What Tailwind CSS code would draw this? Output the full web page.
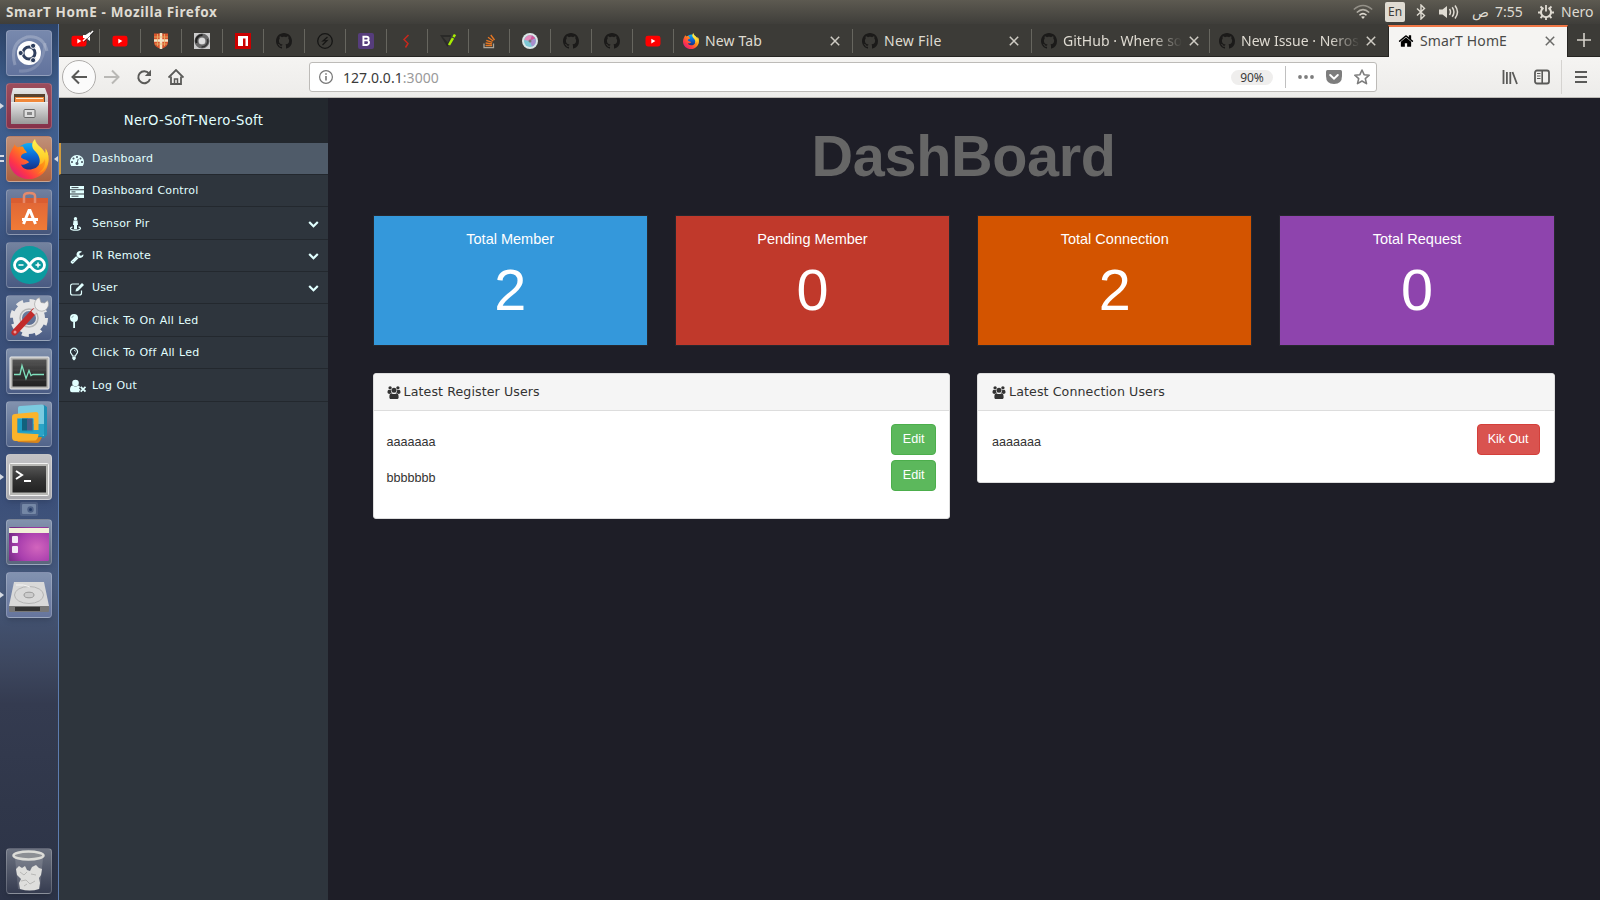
<!DOCTYPE html>
<html lang="en">
<head>
<meta charset="utf-8">
<title>SmarT HomE</title>
<script src="https://cdn.jsdelivr.net/npm/@tailwindcss/browser@4"></script>
</head>
<body class="w-[1600px] h-[900px] overflow-hidden bg-[#1e1e27] flex flex-col font-['Noto_Sans',sans-serif]">

<svg class="absolute w-0 h-0">
  <defs>
    <symbol id="gh" viewBox="0 0 16 16"><path fill="#1b1a19" d="M8 0C3.58 0 0 3.58 0 8c0 3.54 2.29 6.53 5.47 7.59.4.07.55-.17.55-.38 0-.19-.01-.82-.01-1.49-2.01.37-2.53-.49-2.69-.94-.09-.23-.48-.94-.82-1.13-.28-.15-.68-.52-.01-.53.63-.01 1.08.58 1.23.82.72 1.21 1.87.87 2.33.66.07-.52.28-.87.51-1.07-1.78-.2-3.64-.89-3.64-3.95 0-.87.31-1.59.82-2.15-.08-.2-.36-1.02.08-2.12 0 0 .67-.21 2.2.82.64-.18 1.32-.27 2-.27s1.36.09 2 .27c1.53-1.04 2.2-.82 2.2-.82.44 1.1.16 1.92.08 2.12.51.56.82 1.27.82 2.15 0 3.07-1.87 3.75-3.65 3.95.29.25.54.73.54 1.48 0 1.07-.01 1.93-.01 2.2 0 .21.15.46.55.38A8.01 8.01 0 0 0 16 8c0-4.42-3.58-8-8-8z"/></symbol>
    <symbol id="yt" viewBox="0 0 16 16"><rect x=".5" y="2.7" width="15" height="10.8" rx="2.4" fill="#f00"/><path d="M6.3 5.8v4.6l4.1-2.3z" fill="#fff"/></symbol>
    <symbol id="x" viewBox="0 0 10 10"><path d="M.8.8l8.4 8.4M9.2.8L.8 9.2" fill="none" stroke="currentColor" stroke-width="1.5"/></symbol>
    <symbol id="chev" viewBox="0 0 1792 1792"><path fill="currentColor" d="M1683 808l-742 741q-19 19-45 19t-45-19l-742-741q-19-19-19-45.5t19-45.5l166-165q19-19 45-19t45 19l531 531 531-531q19-19 45-19t45 19l166 165q19 19 19 45.5t-19 45.5z"/></symbol>
    <symbol id="users" viewBox="0 0 14 14"><g fill="#333"><circle cx="2.8" cy="2" r="1.8"/><circle cx="11.2" cy="2" r="1.8"/><circle cx="7" cy="4.6" r="2.7"/><path d="M0 6.8C0 5 .6 4 1.4 4c.5.4 1.6.5 2.3.3-.2 1.200.2 2.400.9 3.200-1 0-1.700.300-2.300 1C1 8.500 0 8 0 6.800zM14 6.800C14 5 13.400 4 12.600 4c-.5.4-1.600.5-2.300.3.2 1.200-.2 2.400-.9 3.200 1 0 1.700.300 2.300 1C13 8.500 14 8 14 6.800z"/><path d="M2 12c0-2.800.7-4.200 2.300-4.200C5.800 9 8.200 9 9.700 7.800c1.600 0 2.300 1.400 2.300 4.200 0 1.300-.8 2-2 2H4c-1.200 0-2-.7-2-2z"/></g></symbol>
    <symbol id="ff" viewBox="0 0 40 40">
      <circle cx="20.500" cy="18" r="14" fill="url(#ffb)"/>
      <path fill="url(#ffo)" d="M6 5c-2 4-6 9-6 16 0 11 9 19 20 19s19.500-8 19.500-19.500c0-5-1-8-3-11 .5 3 0 4-.5 5-1-2-3-4-5-6 1 6 2 11 0 15-2 5-6 7-11 7-4 0-7-2-8-5 3 1 5-.5 8-2-1-3-4-2-8-5 0-3 2-4 6-5-1-2-3-3-4-6-3 0-4 0-5 1-2-1-3-2-3.500-4z"/>
      <path fill="url(#ffy)" d="M26 0c-3 3-4 7-1 11 5 5 7 9 5 15 3-1 5-3 6-6 1 6-2 12-8 15 7-2 11.500-8 11.500-14.500 0-5-1-8-3-11 .5 3 0 4-.5 5C35 9 27 7 26 0z"/>
    </symbol>
    <linearGradient id="ffb" x1="0" y1="0" x2="0" y2="1"><stop offset="0" stop-color="#10aef5"/><stop offset=".5" stop-color="#0c62d0"/><stop offset="1" stop-color="#1a2a7a"/></linearGradient>
    <linearGradient id="ffo" x1="1" y1="0" x2="0" y2="1"><stop offset="0" stop-color="#ffd52e"/><stop offset=".4" stop-color="#ff8a16"/><stop offset=".7" stop-color="#ff3647"/><stop offset="1" stop-color="#c8109a"/></linearGradient>
    <linearGradient id="ffy" x1="0" y1="0" x2="0" y2="1"><stop offset="0" stop-color="#fff44f"/><stop offset=".5" stop-color="#ffd22e"/><stop offset="1" stop-color="#ff8a16"/></linearGradient>
    <linearGradient id="gray" x1="0" y1="0" x2="0" y2="1"><stop offset="0" stop-color="#e8e8e8"/><stop offset="1" stop-color="#999"/></linearGradient>
    <linearGradient id="dark" x1="0" y1="0" x2="0" y2="1"><stop offset="0" stop-color="#555"/><stop offset=".5" stop-color="#333"/><stop offset="1" stop-color="#222"/></linearGradient>
    <linearGradient id="bag" x1="0" y1="0" x2="0" y2="1"><stop offset="0" stop-color="#df6436"/><stop offset="1" stop-color="#f07b36"/></linearGradient>
    <radialGradient id="purp" cx=".7" cy=".6" r=".8"><stop offset="0" stop-color="#d265bd"/><stop offset=".6" stop-color="#a93fae"/><stop offset="1" stop-color="#752a85"/></radialGradient>
  </defs>
</svg>

<!-- Desktop panel -->
<header class="h-6 shrink-0 flex items-center justify-between bg-linear-to-b from-[#5d5a51] to-[#3f3e3a] text-[#dfdbd2] text-[14px] leading-6 whitespace-nowrap">
  <span class="pl-1.5 font-bold text-[13.5px] tracking-[.6px]">SmarT HomE - Mozilla Firefox</span>
  <div class="flex items-center h-full pr-1.5">
    <svg class="w-5 h-4 mr-3" viewBox="0 0 20 16" fill="none" stroke="#dfdbd2" stroke-width="1.500"><path d="M.8 5.500Q10-2.500 19.200 5.500" opacity=".45"/><path d="M3.800 8.500Q10 2.800 16.200 8.500" opacity=".7"/><path d="M6.500 11.300Q10 8 13.500 11.300"/><path d="M8 12.800Q10 11.500 12 12.800L10 15z" fill="#dfdbd2" stroke="none"/></svg>
    <span class="w-5 h-5 rounded-[2px] bg-[#dfdbd2] text-[#3c3b37] text-[12px] leading-5 text-center mr-[11px]">En</span>
    <svg class="w-[10px] h-4 mr-[13px]" viewBox="0 0 10 16" fill="none" stroke="#dfdbd2" stroke-width="1.400"><path d="M1 4.500l7.500 7L5 15V1l3.500 3.500-7.500 7"/></svg>
    <svg class="w-5 h-4 mr-[13px]" viewBox="0 0 20 16"><path d="M0 5.500h3.500L8 2v12l-4.500-3.500H0z" fill="#dfdbd2"/><path d="M10.500 5q2 3 0 6M13.200 3.200q3.500 4.800 0 9.600M16 1.500q5 6.500 0 13" fill="none" stroke="#dfdbd2" stroke-width="1.500"/></svg>
    <span class="font-['DejaVu_Sans',sans-serif] text-[14px] w-[17px] mr-[6px]">ص</span>
    <span class="w-[28px] mr-[15px]">7:55</span>
    <svg class="w-4 h-4 mr-[7px]" viewBox="0 0 16 16" fill="none" stroke="#dfdbd2"><path d="M5.500 3.800a5 5 0 1 0 5 0" stroke-width="2"/><path d="M8 1v6.500" stroke-width="1.800"/><path d="M2.500 2.500l2 2M13.500 2.500l-2 2M0 8.500h3M16 8.500h-3M2.500 14l2-2M13.500 14l-2-2M8 16v-3" stroke-width="1.800"/></svg>
    <span class="w-[33px]">Nero</span>
  </div>
</header>

<div class="flex flex-1 min-h-0">

  <!-- Launcher -->
  <nav class="w-[59px] shrink-0 border-r border-[#5d7db0] bg-[linear-gradient(180deg,#2c4266_0px,#40608f_70px,#3f5b8c_180px,#3a5079_230px,#3b4f79_470px,#46597c_560px,#3d475f_640px,#343b50_680px,#30374a_780px,#2c3347_876px)] flex flex-col items-center pt-1.5 pb-1.5 pr-px gap-[7px] relative">
    <div class="w-[46px] h-[46px] shrink-0 rounded-[4px] border border-white/20 bg-linear-to-b from-[#7889ad] to-[#62739d] grid place-items-center shadow-md">
      <svg class="w-[44px] h-[44px]" viewBox="0 0 44 44"><path d="M8 34Q2 12 20 6Q36 4 40 20" fill="none" stroke="#fff" stroke-opacity=".22" stroke-width="3"/><path d="M12 40Q36 42 38 12" fill="none" stroke="#fff" stroke-opacity=".15" stroke-width="3"/><circle cx="22" cy="22" r="12" fill="#fff"/><circle cx="22" cy="22" r="6" fill="none" stroke="#2f3f5e" stroke-width="3"/><g fill="#2f3f5e" stroke="#fff"><circle cx="13.700" cy="22" r="2.600"/><circle cx="26.100" cy="14.800" r="2.600"/><circle cx="26.100" cy="29.200" r="2.600"/></g></svg>
    </div>
    <div class="w-[46px] h-[46px] shrink-0 rounded-[4px] border border-white/20 bg-linear-to-b from-[#9c4d5c] to-[#86314a] grid place-items-center shadow-md">
      <svg class="w-[44px] h-[44px]" viewBox="0 0 44 44"><path d="M6 4h32l3 8v28H4V12z" fill="url(#gray)"/><path d="M7 10h31v12H7z" fill="#59432f"/><path d="M8 13h29v8H8z" fill="#f0883a"/><path d="M9 14.500h27" stroke="#fff0d0"/><path d="M4 18h37v22H4z" fill="url(#gray)"/><path d="M4 18.500h37" stroke="#eee"/><rect x="17" y="25.500" width="11" height="8" rx="1" fill="#ddd" stroke="#666"/><rect x="20" y="28" width="5" height="3" fill="#888"/></svg>
    </div>
    <div class="w-[46px] h-[46px] shrink-0 rounded-[4px] border border-white/20 bg-linear-to-b from-[#c09078] to-[#aa613f] grid place-items-center shadow-md">
      <svg class="w-10 h-10"><use href="#ff"/></svg>
    </div>
    <div class="w-[46px] h-[46px] shrink-0 rounded-[4px] border border-white/20 bg-linear-to-b from-[#71809f] to-[#45557a] grid place-items-center shadow-md">
      <svg class="w-[44px] h-[44px]" viewBox="0 0 44 44"><path d="M4 8h37l-1 32H4z" fill="url(#bag)"/><path d="M4 8h37l-.5 5H4z" fill="#d95d31"/><path d="M17 13V6q0-3 5.500-3T28 6v7" fill="none" stroke="#e58a6c" stroke-width="2.500"/><path d="M16.500 34L22 20.500h1L28.500 34M15 29.500h16" fill="none" stroke="#fff" stroke-width="3"/></svg>
    </div>
    <div class="w-[46px] h-[46px] shrink-0 rounded-[4px] border border-white/20 bg-linear-to-b from-[#74839f] to-[#495a82] grid place-items-center shadow-md">
      <svg class="w-[44px] h-[44px]" viewBox="0 0 44 44"><circle cx="22.500" cy="22" r="19" fill="#0c9a9f"/><path d="M22.500 22c-4-6-6.500-6.500-8.500-6.500a6.500 6.500 0 0 0 0 13c2 0 4.500-.5 8.500-6.500s6.500-6.500 8.500-6.500a6.500 6.500 0 0 1 0 13c-2 0-4.500-.5-8.500-6.500z" fill="none" stroke="#fff" stroke-width="2.800"/><path d="M11.500 22h5M28.500 22h5M31 19.500v5" stroke="#fff" stroke-width="1.500"/></svg>
    </div>
    <div class="w-[46px] h-[46px] shrink-0 rounded-[4px] border border-white/20 bg-linear-to-b from-[#8090ab] to-[#4b5c84] grid place-items-center shadow-md">
      <svg class="w-[44px] h-[44px]" viewBox="0 0 44 44"><circle cx="22" cy="22" r="11.500" fill="none" stroke="#e6e6e6" stroke-width="9"/><circle cx="22" cy="22" r="17" fill="none" stroke="#e6e6e6" stroke-width="4" stroke-dasharray="7 6.350"/><circle cx="22" cy="22" r="9" fill="none" stroke="#b5b5b5" stroke-width="1.500"/><path d="M7.500 36.500L27 15.500" stroke="#c22b2b" stroke-width="6" stroke-linecap="round"/><path d="M26 17l7-7" stroke="#ddd" stroke-width="5"/><path d="M40.500 4.500a7 7 0 1 1-8-3l1.500 5 3.500.5z" fill="#eee" stroke="#999" stroke-width=".6"/><circle cx="8" cy="36" r="1.500" fill="#e99"/></svg>
    </div>
    <div class="w-[46px] h-[46px] shrink-0 rounded-[4px] border border-white/20 bg-linear-to-b from-[#8090ab] to-[#4b5c84] grid place-items-center shadow-md">
      <svg class="w-[44px] h-[44px]" viewBox="0 0 44 44"><rect x="3" y="8" width="39" height="32" rx="1" fill="#b5b5b2" stroke="#eee"/><rect x="5.500" y="10.500" width="34" height="27" fill="url(#dark)"/><path d="M6 16h33M6 21h33M6 31h33" stroke="#555" stroke-width=".5"/><path d="M7 25.500h6l2-9 4 13 3-8 2 5 2-1h11" fill="none" stroke="#7fe0bd" stroke-width="1.300"/></svg>
    </div>
    <div class="w-[46px] h-[46px] shrink-0 rounded-[4px] border border-white/20 bg-linear-to-b from-[#8292ae] to-[#52648a] grid place-items-center shadow-md">
      <svg class="w-[44px] h-[44px]" viewBox="0 0 44 44"><path d="M13 5l24-2 3 2v28l-3 3-24-1z" fill="#1d8fb4"/><path d="M11 6q0-2 2-2l22-1.500q2 0 2 2V34H11z" fill="#7bcbe0"/><path d="M11 22h26v10q0 2-2 2H11z" fill="#2aa3c6"/><path d="M8 36l3 4 19 1q2 0 3-2l2-4z" fill="#d9851b"/><path fill-rule="evenodd" d="M5 15q0-3 3-3l21-2q2.500 0 2.500 2.500V28h-5V16l-16 .500V31l17 1h4q0 4-3 6.500l-20 .5q-3.500 0-3.500-4z" fill="#fbb42b"/><path d="M10.500 16.500h16V30h-16z" fill="#1d9cc2"/><path d="M15 16.500h5.500l-.5 12h-5z" fill="#12617d"/><path d="M20 16.500h5.500v12H20z" fill="#4a5c88"/></svg>
    </div>
    <div class="w-[46px] h-[46px] shrink-0 rounded-[4px] border border-white/30 bg-linear-to-b from-[#c2c2c5] to-[#a9a9ad] grid place-items-center shadow-md">
      <svg class="w-[44px] h-[44px]" viewBox="0 0 44 44"><rect x="2.500" y="8.500" width="39" height="32" rx="1" fill="#b8b8b5" stroke="#f2f2f2"/><rect x="5.500" y="11" width="33.500" height="26.500" fill="url(#dark)"/><path d="M9 16l6 4-6 4M17 26h7" fill="none" stroke="#fff" stroke-width="2"/></svg>
    </div>
    <div class="w-[18px] h-[14px] -mt-[5px] shrink-0 rounded-[2px] bg-white/10 grid place-items-center overflow-hidden">
      <svg class="w-[14px] h-[10px]" viewBox="0 0 14 10"><rect width="14" height="10" y="0" rx="1" fill="#7487a5"/><circle cx="8.500" cy="5.500" r="3.200" fill="#4c5f84"/><circle cx="8.500" cy="5.500" r="1.500" fill="#243c66"/></svg>
    </div>
    <div class="w-[46px] h-[46px] -mt-[4px] shrink-0 rounded-[4px] border border-white/20 bg-linear-to-b from-[#8292ae] to-[#5a667c] grid place-items-center shadow-md">
      <svg class="w-[44px] h-[44px]" viewBox="0 0 44 44"><rect x="2" y="7" width="40" height="34" rx="1.500" fill="url(#purp)"/><path d="M2 8h40v5H2z" fill="#f1f0d8"/><rect x="5" y="16" width="6" height="7" rx="1" fill="#f3eaf5"/><rect x="5" y="26" width="6" height="7" rx="1" fill="#f3eaf5"/></svg>
    </div>
    <div class="w-[46px] h-[46px] shrink-0 rounded-[4px] border border-white/20 bg-linear-to-b from-[#8292b0] to-[#66759d] grid place-items-center shadow-md">
      <svg class="w-[44px] h-[44px]" viewBox="0 0 44 44"><path d="M7 9h30l5 24H2z" fill="#d9d9d9"/><path d="M2 33h40v5q0 1-1 1H3q-1 0-1-1z" fill="#777"/><path d="M8 34h25v4H8z" fill="#333"/><ellipse cx="22" cy="22" rx="14.500" ry="8.500" fill="none" stroke="#b5b5b5"/><ellipse cx="22" cy="22" rx="5" ry="2.800" fill="#ccc" stroke="#999"/><path d="M9 12q8-1 14 2" stroke="#f3f3f3" fill="none"/></svg>
    </div>
    <div class="w-[46px] h-[46px] shrink-0 mt-auto rounded-[4px] border border-white/20 bg-linear-to-b from-[#6d7381] to-[#363c50] grid place-items-center shadow-md">
      <svg class="w-[44px] h-[44px]" viewBox="0 0 44 44"><path d="M8 9h28l-3 31q-11 2-22 0z" fill="#fff" fill-opacity=".14"/><ellipse cx="21.500" cy="6.500" rx="15" ry="4" fill="#8c8f94" stroke="#dcdcd8" stroke-width="2.500"/><path d="M9 20l3-3 3 2 3-2 2 4 3 1 2-4 4-2 3 3 3 1-1 6-2 3 1 5-1 6q-9 3-19 0l-1-6 2-4-4-4z" fill="#dededc"/><path d="M13 23l4 3 3-3M24 25l5 1M14 32l5-1 4 4 5-3M17 37l3-2" stroke="#b8b8b6" fill="none"/></svg>
    </div>
    <!-- running-app markers -->
    <i class="absolute left-0 top-[79px] border-y-[3px] border-l-4 border-y-transparent border-l-[#d5dae3]"></i>
    <i class="absolute left-0 top-[131px] w-1 h-[7px] border-y-2 border-[#d5dae3]"></i>
    <i class="absolute right-0 top-[132px] border-y-[3px] border-r-4 border-y-transparent border-r-[#d5dae3]"></i>
    <i class="absolute left-0 top-[450px] border-y-[3px] border-l-4 border-y-transparent border-l-[#d5dae3]"></i>
    <i class="absolute left-0 top-[568px] border-y-[3px] border-l-4 border-y-transparent border-l-[#d5dae3]"></i>
  </nav>

  <div class="flex-1 min-w-0 flex flex-col">

    <!-- Tabs -->
    <div class="h-[33px] shrink-0 flex items-stretch bg-[#3c3b37] border-b border-[#262522] text-[14px] text-[#dfdbd2] whitespace-nowrap [&_span]:-mt-[2px] [&_u]:w-[41px] [&_u]:h-6 [&_u]:mt-[5px] [&_u]:border-r [&_u]:border-[#67665f] [&_u]:grid [&_u]:place-items-center [&_u]:shrink-0 [&_u>svg]:w-4 [&_u>svg]:h-4">
      <u class="relative"><svg><use href="#yt"/></svg><svg class="absolute left-[23px] top-[1px] !w-3 !h-3" viewBox="0 0 12 12"><path d="M1 5h2.500L8 2v9L4 8H1z" fill="#fff"/><path d="M1 11L11 1" stroke="#fff" stroke-width="1.500"/><path d="M2 12L12 2" stroke="#222" stroke-width=".6"/></svg></u>
      <u><svg><use href="#yt"/></svg></u>
      <u><svg viewBox="0 0 16 16"><path d="M1 .5h14v9q0 4-7 6.500-7-2.500-7-6.500z" fill="#d8542c"/><path d="M8 0v16M1 7.500h14" stroke="#f3e3c5" stroke-width="2.500"/><path d="M4.500 1v12M11.500 1v12M1 4h14M2 11h12" stroke="#e8b36a" stroke-width=".8"/></svg></u>
      <u><svg viewBox="0 0 16 16"><rect width="16" height="16" fill="#ccc"/><circle cx="8" cy="8" r="5.500" fill="none" stroke="#666" stroke-width="4"/><path d="M2.500 10a6 6 0 0 1 6-8" fill="none" stroke="#222" stroke-width="2"/><path d="M13.500 6a6 6 0 0 1-6 8" fill="none" stroke="#333" stroke-width="1.500"/><circle cx="8" cy="8" r="3" fill="#ddd"/></svg></u>
      <u><svg viewBox="0 0 16 16"><rect width="16" height="16" fill="#cb0000"/><path d="M3 3h10v10h-2.500V5.500H8V13H3z" fill="#fff"/></svg></u>
      <u><svg><use href="#gh"/></svg></u>
      <u><svg viewBox="0 0 16 16" fill="none" stroke="#161615"><circle cx="8" cy="8" r="7.300" stroke-width="1.300"/><path d="M10.500 4L6 8l4-.500L5.500 12" stroke-width="1.200"/></svg></u>
      <u><svg viewBox="0 0 16 16"><rect width="16" height="16" rx="2" fill="#563d7c"/><path d="M5.400 3.800h3.200q2 0 2 1.900 0 1.700-2 1.700H5.400h3.400q2.200 0 2.200 2.200T8.800 12H5.400z" fill="none" stroke="#fff" stroke-width="1.900"/></svg></u>
      <u><svg viewBox="0 0 16 16"><path d="M9.500 2L5 6.500l4 4-2.500 4" fill="none" stroke="#c9281c" stroke-width="1.500"/></svg></u>
      <u><svg viewBox="0 0 16 16"><path d="M0 2h11L7.500 14z" fill="#2a2a28"/><path d="M3 4h7l-2 6z" fill="#3c3b37"/><path d="M9 12l6-10.500" stroke="#a8ef00" stroke-width="2.500" stroke-dasharray="8 1 4"/></svg></u>
      <u><svg viewBox="0 0 16 16" fill="none"><path d="M3 10.500v4.200h9.500v-4.200" stroke="#aaa59a" stroke-width="1.300"/><path d="M4.500 12.500H11M4.600 10l6.400.8M5.300 7.300l6 2M7 4.300l5.200 3.800M9.800 2l3.700 5" stroke="#e87722" stroke-width="1.300"/></svg></u>
      <u><svg viewBox="0 0 16 16"><circle cx="8" cy="8" r="8" fill="#dbe7e7"/><circle cx="8" cy="8" r="6" fill="#7cc8d5"/><path d="M8 8L2.300 7A6 6 0 0 1 10 2.300z" fill="#e58abb"/><path d="M8 8l5.500-2A6 6 0 0 1 10 13.500z" fill="#a98fce"/><path d="M8 8l2-5.700 3.500 3z" fill="#d3569c"/><circle cx="8" cy="8" r="1.500" fill="#777"/></svg></u>
      <u><svg><use href="#gh"/></svg></u>
      <u><svg><use href="#gh"/></svg></u>
      <u><svg><use href="#yt"/></svg></u>
      <div class="w-[179px] h-6 mt-[5px] pl-[9px] pr-[12px] border-r border-[#67665f] flex items-center"><svg class="w-4 h-4 mr-[6px]"><use href="#ff"/></svg><span class="flex-1 tracking-[.15px]">New Tab</span><svg class="w-[10px] h-[10px] text-[#cfccc4]"><use href="#x"/></svg></div>
      <div class="w-[179px] h-6 mt-[5px] pl-[9px] pr-[12px] border-r border-[#67665f] flex items-center"><svg class="w-4 h-4 mr-[6px]"><use href="#gh"/></svg><span class="flex-1 tracking-[.3px]">New File</span><svg class="w-[10px] h-[10px] text-[#cfccc4]"><use href="#x"/></svg></div>
      <div class="w-[178px] h-6 mt-[5px] pl-[9px] pr-[11px] border-r border-[#67665f] flex items-center"><svg class="w-4 h-4 mr-[6px] shrink-0"><use href="#gh"/></svg><span class="w-[119px] mr-[7px] mask-r-from-75% mask-r-to-100%">GitHub · Where so</span><svg class="w-[10px] h-[10px] shrink-0 text-[#cfccc4]"><use href="#x"/></svg></div>
      <div class="w-[178px] h-6 mt-[5px] pl-[9px] pr-[12px] flex items-center"><svg class="w-4 h-4 mr-[6px] shrink-0"><use href="#gh"/></svg><span class="w-[119px] mr-[6px] mask-r-from-75% mask-r-to-100%">New Issue · Neros</span><svg class="w-[10px] h-[10px] shrink-0 text-[#cfccc4]"><use href="#x"/></svg></div>
      <div class="w-[180px] mt-px -mb-px pl-[9px] pr-[12px] border-t-2 border-t-[#f07746] border-x border-x-[#262522] bg-[#f5f4f2] text-[#4a4a48] flex items-center pb-[2px]"><svg class="w-4 h-4 mr-[6px]" viewBox="0 0 1792 1792"><path d="M1472 992v480q0 26-19 45t-45 19h-384v-384h-256v384h-384q-26 0-45-19t-19-45v-480q0-1 .5-3t.5-3l575-474 575 474q1 2 1 6zm223-69l-62 74q-8 9-21 11h-3q-13 0-21-7l-692-577-692 577q-12 8-24 7-13-2-21-11l-62-74q-8-10-7-23.500t11-21.500l719-599q32-26 76-26t76 26l244 204v-195q0-14 9-23t23-9h192q14 0 23 9t9 23v408l219 182q10 8 11 21.500t-7 23.500z"/></svg><span class="flex-1 tracking-[.15px]">SmarT HomE</span><svg class="w-[10px] h-[10px] text-[#6a6a68]"><use href="#x"/></svg></div>
      <div class="flex-1 grid place-items-center"><svg class="w-[14px] h-[14px]" viewBox="0 0 14 14"><path d="M7 0v14M0 7h14" stroke="#d5d2ca" stroke-width="1.600"/></svg></div>
    </div>

    <!-- Navigation toolbar -->
    <div class="h-[41px] shrink-0 flex items-center bg-linear-to-b from-[#f5f4f2] to-[#edecea] border-b border-[#bcbab6] pl-[3px]">
      <div class="w-[34px] h-[34px] rounded-full border border-[#aeacaa] bg-[#fbfbfb] grid place-items-center"><svg class="w-4 h-4" viewBox="0 0 16 16" fill="none" stroke="#5a5a58" stroke-width="2"><path d="M16 8H1.500M8 1.500L1.500 8 8 14.500"/></svg></div>
      <svg class="w-4 h-4 ml-2" viewBox="0 0 16 16" fill="none" stroke="#b9b8b5" stroke-width="2"><path d="M0 8h14.500M8 1.500L14.500 8 8 14.500"/></svg>
      <svg class="w-4 h-4 ml-4" viewBox="0 0 16 16" fill="none" stroke="#5a5a58" stroke-width="2"><path d="M13 4.500A6 6 0 1 0 14 10"/><path d="M15 .8V7H8.800z" fill="#5a5a58" stroke="none"/></svg>
      <svg class="w-4 h-4 ml-4" viewBox="0 0 16 16" fill="none" stroke="#5a5a58" stroke-width="1.800"><path d="M.5 8.500L8 1l7.500 7.500"/><path d="M3 7.500V15h10V7.500"/><path d="M6.500 15v-5h3v5" stroke-width="1.500"/></svg>
      <div class="ml-[125px] w-[1068px] h-[30px] rounded-[3px] border border-[#bdbbb8] bg-white flex items-center pl-[9px] pr-[6px] text-[14px] text-[#3a3a3a]">
        <svg class="w-[14px] h-[14px] mr-[10px]" viewBox="0 0 14 14"><circle cx="7" cy="7" r="6.400" fill="none" stroke="#777" stroke-width="1.200"/><path d="M7 6v4.500M7 3.300v1.500" stroke="#777" stroke-width="1.600"/></svg>
        <span class="flex-1 tracking-[.05px]">127.0.0.1<span class="text-[#9a9a9a]">:3000</span></span>
        <span class="w-[42px] h-[15px] rounded-full bg-[#efeeed] text-[12px] leading-[15px] text-center">90%</span>
        <span class="w-px h-[22px] bg-[#c0c0c0] ml-3 mr-3"></span>
        <svg class="w-4 h-4 mr-3" viewBox="0 0 16 16" fill="#7d7d7d"><circle cx="2" cy="8" r="1.900"/><circle cx="8" cy="8" r="1.900"/><circle cx="14" cy="8" r="1.900"/></svg>
        <svg class="w-4 h-4 mr-3" viewBox="0 0 16 16"><path d="M1.500 1h13Q16 1 16 2.500V7q0 8-8 8T0 7V2.500Q0 1 1.500 1z" fill="#7d7d7d"/><path d="M4.200 6L8 9.700 11.800 6" fill="none" stroke="#fff" stroke-width="2" stroke-linecap="round"/></svg>
        <svg class="w-4 h-4" viewBox="0 0 16 16"><path d="M8 1l2.100 4.700 5.100.5-3.900 3.400 1.200 5L8 12l-4.500 2.600 1.200-5L.8 6.200l5.100-.5z" fill="none" stroke="#7d7d7d" stroke-width="1.600" stroke-linejoin="round"/></svg>
      </div>
      <svg class="w-4 h-4 ml-[125px]" viewBox="0 0 16 16" fill="none" stroke="#5a5a58" stroke-width="1.800"><path d="M1.500 1v14M4.900 3v12M8.300 3v12M10.500 3l4.500 12"/></svg>
      <svg class="w-4 h-4 ml-4" viewBox="0 0 16 16" fill="none" stroke="#5a5a58"><rect x="1" y="1.500" width="14" height="13" rx="2" stroke-width="1.800"/><path d="M8.200 2v12" stroke-width="1.600"/><path d="M3 4.500h3.500M3 7h3.500M3 9.500h3.500" stroke-width="1"/></svg>
      <span class="w-px h-[34px] bg-[#d5d3d0] ml-[11px] mr-[13px]"></span>
      <svg class="w-3 h-[14px]" viewBox="0 0 12 14" stroke="#5a5a58" stroke-width="2"><path d="M0 2h12M0 7h12M0 12h12"/></svg>
    </div>

    <!-- Page -->
    <div class="flex-1 min-h-0 flex">
      <aside class="w-[269px] bg-[#2e353d] font-['DejaVu_Sans',sans-serif] text-[#e1ffff] text-[11px] tracking-[.17px] [word-spacing:.6px]">
        <div class="h-[45px] leading-[45px] bg-[#23282e] text-center text-[13.2px] tracking-[.3px]">NerO-SofT-Nero-Soft</div>
        <ul class="[&>li]:h-8 [&>li:nth-child(3n)]:h-[33px] [&>li:last-child]:h-[33px] [&>li]:flex [&>li]:items-center [&>li]:border-b [&>li]:border-[#23282e] [&>li]:pl-[11px] [&>li]:pr-[9px] [&_b]:flex-1 [&_b]:font-normal [&_b]:pt-[2px] [&>li>svg:first-child]:w-[16px] [&>li>svg:first-child]:h-[14px] [&>li>svg:first-child]:mr-[6px] [&>li>svg:first-child]:mt-[2px]">
          <li class="bg-[#4f5b69] !pl-[9px] border-l-2 !border-l-[#d19b3d]"><svg viewBox="0 0 2048 1792" fill="currentColor"><path d="M384 1152q0-53-37.500-90.500t-90.500-37.500-90.500 37.500-37.500 90.500 37.500 90.500 90.500 37.500 90.500-37.500 37.500-90.500zm192-448q0-53-37.500-90.500t-90.500-37.500-90.500 37.500-37.500 90.500 37.500 90.500 90.500 37.500 90.500-37.500 37.500-90.500zm428 481l101-382q6-26-7.500-48.500t-38.500-29.500-48 6.500-30 39.500l-101 382q-60 5-107 43.500t-63 98.500q-20 77 20 146t117 89 146-20 89-117q16-60-6-117t-72-91zm660-33q0-53-37.500-90.500t-90.500-37.500-90.500 37.500-37.500 90.500 37.500 90.500 90.500 37.500 90.500-37.500 37.500-90.500zm-640-640q0-53-37.500-90.500t-90.500-37.500-90.500 37.500-37.500 90.500 37.500 90.500 90.500 37.500 90.500-37.500 37.500-90.500zm448 192q0-53-37.500-90.500t-90.500-37.500-90.500 37.500-37.500 90.500 37.500 90.500 90.500 37.500 90.500-37.500 37.500-90.500zm320 448q0 261-141 483-19 29-54 29h-1402q-35 0-54-29-141-221-141-483 0-182 71-348t191-286 286-191 348-71 348 71 286 191 191 286 71 348z"/></svg><b>Dashboard</b></li>
          <li><svg viewBox="0 0 16 14" fill="currentColor"><path d="M0 1h14v3.300H0zM0 5.300h14v3.300H0zM0 9.600h14v3.300H0z"/><path d="M1.500 2.600h7M1.500 6.900h4M1.500 11.200h7" stroke="#2e353d" stroke-width=".9"/></svg><b>Dashboard Control</b></li>
          <li><svg viewBox="0 0 16 14" fill="currentColor"><circle cx="5.500" cy="1.700" r="1.700"/><path d="M3.500 3.500h4L8 8H7v4H4V8H3z"/><path d="M2.500 9.800Q.5 10.300.5 11.300.8 13.200 5.500 13.200t5-1.900q0-1-2-1.500" fill="none" stroke="currentColor" stroke-width="1.200"/></svg><b>Sensor Pir</b><svg class="w-[11px] h-[11px]"><use href="#chev"/></svg></li>
          <li><svg viewBox="0 0 2048 1792" fill="currentColor"><path d="M448 1472q0-26-19-45t-45-19-45 19-19 45 19 45 45 19 45-19 19-45zm644-420l-682 682q-37 37-90 37-52 0-91-37l-106-108q-38-36-38-90 0-53 38-91l681-681q39 98 114.500 173.500t173.500 114.500zm634-435q0 39-23 106-47 134-164.500 217.500t-258.500 83.500q-185 0-316.500-131.500t-131.500-316.500 131.500-316.500 316.500-131.500q58 0 121.500 16.500t107.500 46.500q16 11 16 28t-16 28l-293 169v224l193 107q5-3 79-48.500t135.500-81 70.500-35.500q15 0 23.500 10t8.500 25z"/></svg><b>IR Remote</b><svg class="w-[11px] h-[11px]"><use href="#chev"/></svg></li>
          <li><svg viewBox="0 0 16 14" fill="none" stroke="currentColor"><path d="M9 2H2.500Q.6 2 .6 4v7q0 2 1.900 2h7q2 0 2-2V8.500" stroke-width="1.200"/><path d="M5.500 9.500L6 7l6-6 2 2-6 6z" fill="currentColor" stroke="none"/></svg><b>User</b><svg class="w-[11px] h-[11px]"><use href="#chev"/></svg></li>
          <li><svg viewBox="0 0 16 14" fill="currentColor"><circle cx="4" cy="4" r="4"/><path d="M3.200 8h1.800v6H3.200z"/><path d="M1.800 4a2.200 2.200 0 0 1 2-2" stroke="#8fa8ad" stroke-width=".8" fill="none"/></svg><b>Click To On All Led</b></li>
          <li><svg viewBox="0 0 16 14" fill="none" stroke="currentColor"><path d="M2.500 9Q2.300 8 1.500 7A3.400 3.400 0 1 1 6.500 7q-.8 1-1 2z" stroke-width="1.200"/><path d="M4 3.200q1.300 0 1.500 1.300" stroke-width=".8"/><path d="M2.300 9.700h3.400v2L4.500 13.200h-1L2.300 11.700z" fill="currentColor" stroke="none"/></svg><b>Click To Off All Led</b></li>
          <li><svg viewBox="0 0 16 14" fill="currentColor"><circle cx="5.500" cy="4" r="3.300"/><path d="M0 11q0-4.500 2.700-4.500 2.800 2 5.600 0Q9.500 6.600 10 8L9 9.500l1.500 1.200-1.500 1.500.8 1H2Q0 13.200 0 11z"/><path d="M10.700 7.800l4.800 4.800M15.500 7.800l-4.800 4.800" stroke="currentColor" stroke-width="1.800"/></svg><b>Log Out</b></li>
        </ul>
      </aside>

      <main class="flex-1 pl-[44.6px] pr-[45.4px] font-['Liberation_Sans',sans-serif]">
        <h1 class="pt-[26px] text-center font-bold text-[57.6px] leading-[64px] tracking-[-.35px] text-[#666]">DashBoard</h1>
        <section class="mt-[27px] grid grid-cols-4 gap-[27px] text-white text-center text-[14.5px]">
          <div class="h-[131px] border border-[#26272e] bg-[#3498db] bg-clip-padding pt-[13px] leading-[20px]">Total Member<span class="block text-[57.600px] leading-[82px]">2</span></div>
          <div class="h-[131px] border border-[#26272e] bg-[#c0392b] bg-clip-padding pt-[13px] leading-[20px]">Pending Member<span class="block text-[57.600px] leading-[82px]">0</span></div>
          <div class="h-[131px] border border-[#26272e] bg-[#d35400] bg-clip-padding pt-[13px] leading-[20px]">Total Connection<span class="block text-[57.600px] leading-[82px]">2</span></div>
          <div class="h-[131px] border border-[#26272e] bg-[#8e44ad] bg-clip-padding pt-[13px] leading-[20px]">Total Request<span class="block text-[57.600px] leading-[82px]">0</span></div>
        </section>
        <section class="mt-[27px] grid grid-cols-2 gap-[27px] items-start text-[12.600px] text-[#333]">
          <div class="h-[146px] rounded-[3px] border border-[#ddd] bg-white overflow-hidden">
            <h2 class="h-[37px] flex items-center gap-[3px] pl-[13px] bg-[#f5f5f5] border-b border-[#ddd] font-['DejaVu_Sans',sans-serif] tracking-[.1px]"><svg class="w-[14px] h-[13px]"><use href="#users"/></svg>Latest Register Users</h2>
            <ul class="p-[13px] flex flex-col gap-[5px]">
              <li class="h-[31px] flex items-start justify-between"><span class="pt-[9px] leading-[18px]">aaaaaaa</span><a class="w-[45px] h-[31px] rounded-[4px] border border-[#4cae4c] bg-[#5cb85c] text-white text-center leading-[28px]">Edit</a></li>
              <li class="h-[31px] flex items-start justify-between"><span class="pt-[9px] leading-[18px]">bbbbbbb</span><a class="w-[45px] h-[31px] rounded-[4px] border border-[#4cae4c] bg-[#5cb85c] text-white text-center leading-[28px]">Edit</a></li>
            </ul>
          </div>
          <div class="h-[110px] rounded-[3px] border border-[#ddd] bg-white overflow-hidden">
            <h2 class="h-[37px] flex items-center gap-[3px] pl-[14px] bg-[#f5f5f5] border-b border-[#ddd] font-['DejaVu_Sans',sans-serif] tracking-[.1px]"><svg class="w-[14px] h-[13px]"><use href="#users"/></svg>Latest Connection Users</h2>
            <ul class="py-[13px] px-[14px]">
              <li class="h-[31px] flex items-start justify-between"><span class="pt-[9px] leading-[18px]">aaaaaaa</span><a class="w-[63px] h-[31px] rounded-[4px] border border-[#d43f3a] bg-[#d9534f] text-white text-center leading-[28px] tracking-[-.1px]">Kik Out</a></li>
            </ul>
          </div>
        </section>
      </main>
    </div>
  </div>
</div>
</body>
</html>
